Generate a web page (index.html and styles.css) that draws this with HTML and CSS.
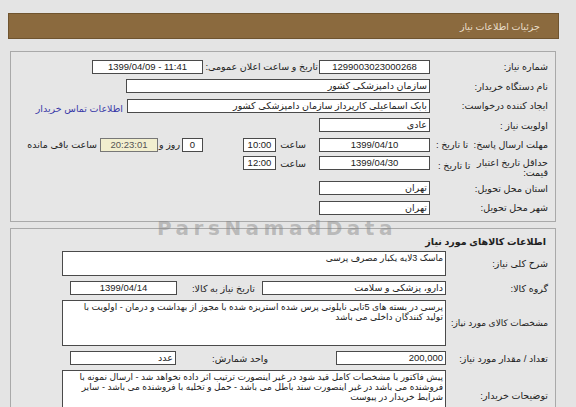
FILE: index.html
```html
<!DOCTYPE html>
<html lang="fa">
<head>
<meta charset="utf-8">
<title>جزئیات اطلاعات نیاز</title>
<link rel="stylesheet" href="styles.css">
</head>
<body>
<div class="page">
  <div class="header"><span>جزئیات اطلاعات نیاز</span></div>

  <div class="panel p1">
    <div class="row">
      <div class="lbl">شماره نیاز:</div>
      <div class="box c w111">1299003023000268</div>
      <div class="lbl2 w115">تاریخ و ساعت اعلان عمومی:</div>
      <div class="box c w111">1399/04/09 - 11:41</div>
    </div>
    <div class="row">
      <div class="lbl">نام دستگاه خریدار:</div>
      <div class="box w304">سازمان دامپزشکی کشور</div>
    </div>
    <div class="row">
      <div class="lbl">ایجاد کننده درخواست:</div>
      <div class="box w303">بابک اسماعیلی کارپرداز سازمان دامپزشکی کشور</div>
      <a class="link">اطلاعات تماس خریدار</a>
    </div>
    <div class="row">
      <div class="lbl">اولویت نیاز :</div>
      <div class="box w111">عادی</div>
    </div>
    <div class="row">
      <div class="lbl">مهلت ارسال پاسخ:&nbsp; تا تاریخ :</div>
      <div class="box c w111">1399/04/10</div>
      <div class="hour">ساعت</div>
      <div class="box c w33">10:00</div>
      <div class="box c w21 days">0</div>
      <div class="and">روز و</div>
      <div class="box c w58 remain">20:23:01</div>
      <div class="remain-lbl">ساعت باقی مانده</div>
    </div>
    <div class="row tall">
      <div class="lbl split"><span class="wrap">حداقل تاریخ اعتبار<br>قیمت:</span><span class="to">تا تاریخ :</span></div>
      <div class="box c w111">1399/04/30</div>
      <div class="hour">ساعت</div>
      <div class="box c w33">12:00</div>
    </div>
    <div class="row">
      <div class="lbl">استان محل تحویل:</div>
      <div class="box w111">تهران</div>
    </div>
    <div class="row">
      <div class="lbl">شهر محل تحویل:</div>
      <div class="box w111">تهران</div>
    </div>
  </div>

  <div class="panel p2">
    <div class="title">اطلاعات کالاهای مورد نیاز</div>
    <div class="row2 rA">
      <div class="lbl3">شرح کلی نیاز:</div>
      <div class="area hA">ماسک 3لایه یکبار مصرف پرسی</div>
    </div>
    <div class="row2">
      <div class="lbl3">گروه کالا:</div>
      <div class="box w184">دارو، پزشکی و سلامت</div>
      <div class="lbl4 w78">تاریخ نیاز به کالا:</div>
      <div class="box c w107">1399/04/14</div>
    </div>
    <div class="row2 rC">
      <div class="lbl3 tight">مشخصات کالای مورد نیاز:</div>
      <div class="area hC">پرسی در بسته های 5تایی نایلونی پرس شده استریزه شده با مجوز از بهداشت و درمان - اولویت با<br>تولید کنندگان داخلی می باشد</div>
    </div>
    <div class="row2">
      <div class="lbl3">تعداد / مقدار مورد نیاز:</div>
      <div class="box w110">200,000</div>
      <div class="lbl4 w92">واحد شمارش:</div>
      <div class="box w106">عدد</div>
    </div>
    <div class="row2 rE">
      <div class="lbl3 lblE">توضیحات خریدار:</div>
      <div class="area hE">پیش فاکتور با مشخصات کامل قید شود در غیر اینصورت ترتیب اثر داده نخواهد شد - ارسال نمونه با<br>فروشنده می باشد در غیر اینصورت سند باطل می باشد - حمل و تخلیه با فروشنده می باشد - سایر<br>شرایط خریدار در پیوست</div>
    </div>
  </div>

  <div class="watermark">ParsNamadData</div>
</div>
</body>
</html>
```

FILE: styles.css
```css
* { box-sizing: border-box; }
html, body { margin: 0; padding: 0; }
body {
  background: #e4e4e4;
  font-family: "Liberation Sans", "DejaVu Sans", sans-serif;
  font-size: 9.5px;
  color: #222;
  overflow: hidden;
  height: 407px;
}
.page {
  position: relative;
  direction: rtl;
  padding-top: 13px;
}
.header {
  margin-right: 17px;
  width: 551px;
  height: 26px;
  background: #8b6a3e;
  border: 1px solid #6f542f;
  color: #eadfcb;
  display: flex;
  align-items: center;
  padding-right: 18px;
  font-size: 9.5px;
}
.panel {
  margin-right: 20px;
  width: 546px;
  border: 1px solid #a9a9a9;
  background: #e6e6e6;
  padding-right: 7px;
}
.p1 {
  margin-top: 12px;
  height: 171px;
  padding-top: 5px;
}
.p2 {
  margin-top: 6px;
  height: 200px;
  padding-top: 6px;
}
.row {
  display: flex;
  align-items: center;
  height: 19.5px;
  white-space: nowrap;
}
.row.tall {
  height: 24px;
  align-items: flex-start;
  padding-top: 1px;
}
.lbl {
  width: 110px;
  margin-left: 8px;
  flex: none;
  white-space: nowrap;
}
.lbl.split {
  display: flex;
  align-items: flex-start;
  justify-content: space-between;
  padding-top: 2px;
}
.lbl .wrap {
  line-height: 10px;
}
.lbl .to { padding-top: 2px; }
.box {
  flex: none;
  height: 14px;
  background: #fff;
  border: 1px solid #4a4a4a;
  line-height: 12px;
  padding: 0 2px;
  white-space: nowrap;
  overflow: hidden;
  text-align: right;
}
.box.c { text-align: center; direction: ltr; }
.w21 { width: 21px; }
.w33 { width: 33px; }
.w58 { width: 58px; }
.w106 { width: 106px; }
.w107 { width: 107px; }
.w110 { width: 110px; }
.w111 { width: 111px; }
.w184 { width: 184px; }
.w303 { width: 303px; }
.w304 { width: 304px; }
.lbl2 { flex: none; white-space: nowrap; margin-right: 1px; margin-left: 3px; }
.w115 { width: 112px; }
.link {
  margin-right: 4px;
  color: #3a3aa8;
  align-self: flex-end;
  margin-bottom: 2px;
}
.hour {
  flex: none;
  width: 43px;
  padding-right: 13px;
}
.row.tall .hour { padding-top: 2px; }
.days { margin-right: 40px; }
.and { flex: none; width: 24px; padding-right: 2px; }
.remain { background: #f2efcf; border-color: #777; color: #555; }
.remain-lbl { margin-right: 3px; }

.title {
  font-weight: bold;
  height: 13px;
  line-height: 13px;
  margin-bottom: 3px;
  padding-right: 2px;
}
.row2 {
  display: flex;
  align-items: center;
  margin-bottom: 5px;
  white-space: nowrap;
}
.lbl3 {
  width: 102px;
  flex: none;
  white-space: nowrap;
}
.lbl3.tight { font-size: 9px; }
.lbl4 { flex: none; }
.w78 { width: 78px; margin-right: 7px; }
.w92 { width: 92px; margin-right: 68px; }
.area {
  width: 384px;
  background: #fff;
  border: 1px solid #4a4a4a;
  padding: 1px 2px;
  font-size: 9px;
  line-height: 10px;
  text-align: right;
  white-space: nowrap;
  overflow: hidden;
}
.hA { height: 25px; }
.hC { height: 46px; }
.hE { height: 50px; }
.lblE { align-self: flex-start; margin-top: 20px; }
.watermark {
  position: absolute;
  left: 157px;
  top: 218px;
  font-family: "DejaVu Sans", sans-serif;
  font-weight: bold;
  font-size: 20px;
  line-height: 20px;
  letter-spacing: 4.5px;
  color: rgba(130,130,130,0.45);
  direction: ltr;
  pointer-events: none;
}
```
